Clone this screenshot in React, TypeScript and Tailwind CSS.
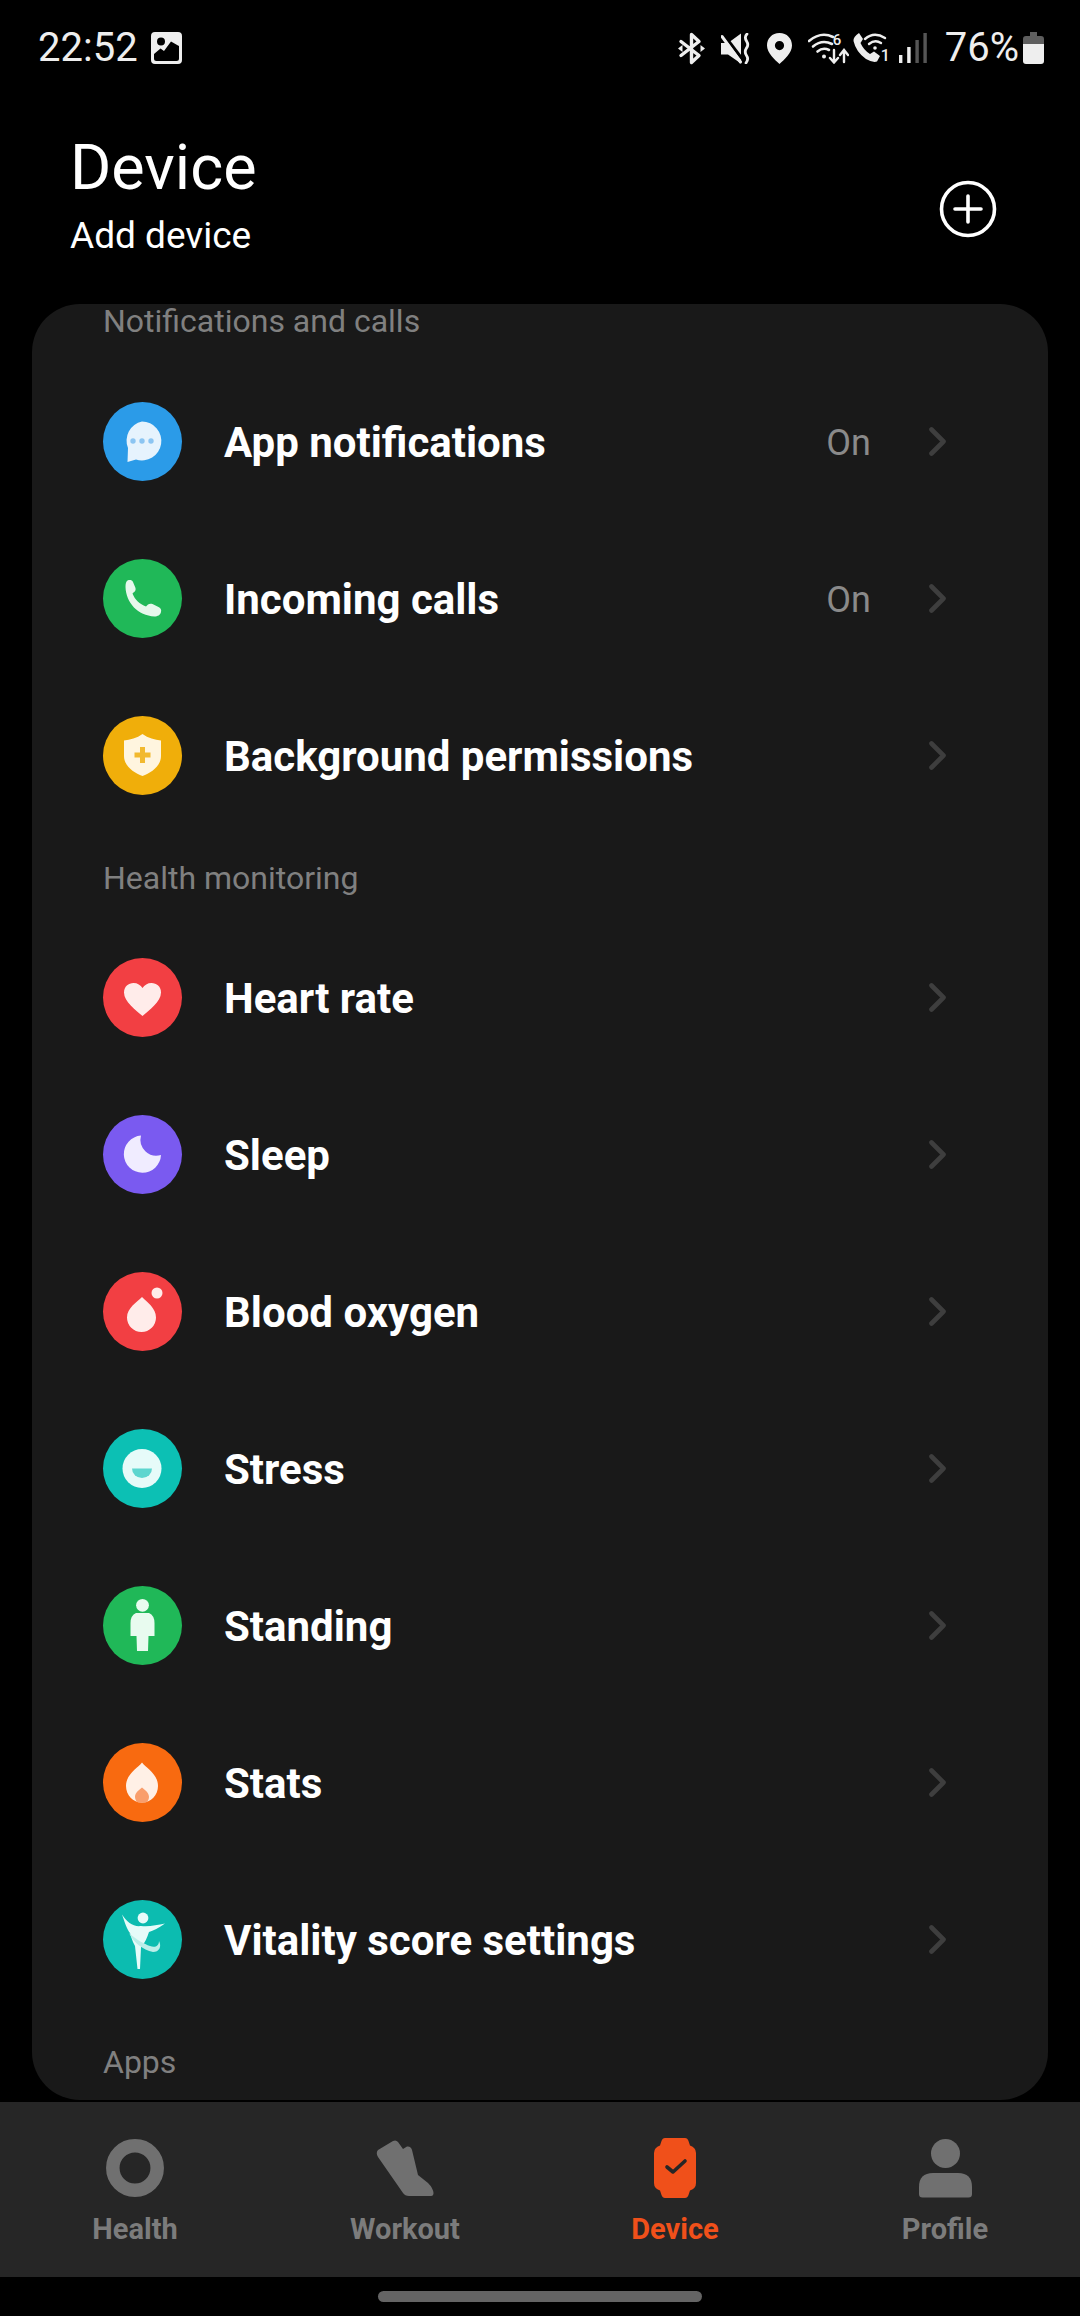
import React from "react";

const W = "#eeeeee";

function Bluetooth() {
  return (
    <svg width="27" height="33" viewBox="0 0 27 33">
      <polyline points="3,9.5 21,23.5 13.5,30.5 13.5,2.5 21,9.5 3,23.5" fill="none" stroke={W} strokeWidth="3.4" strokeLinejoin="round" strokeLinecap="round" />
      <path d="M0 16.5 L4.5 13 V20Z M27 16.5 L22.5 13 V20Z" fill={W} />
    </svg>
  );
}
function Mute() {
  return (
    <svg width="30" height="31" viewBox="0 0 30 31">
      <path d="M0 10 H7 L20 0.5 V30.5 L7 21.5 H0Z" fill={W} />
      <path d="M3 2 L22 27" stroke="#000" strokeWidth="3" />
      <path d="M1 3.5 L19.5 29" stroke={W} strokeWidth="3" strokeLinecap="round" />
      <path d="M26 1 Q23 4 25.5 8 Q28 12 25.5 15 Q23 19 25.5 22.5 Q28 26 25 30" fill="none" stroke={W} strokeWidth="2.8" strokeLinecap="round" />
    </svg>
  );
}
function Pin() {
  return (
    <svg width="25" height="31" viewBox="0 0 25 31">
      <path fillRule="evenodd" d="M12.5 0 C20 0 25 5.5 25 12.5 C25 20 17 27 12.5 31 C8 27 0 20 0 12.5 C0 5.5 5 0 12.5 0Z M12.5 8 A4.6 4.6 0 1 0 12.5 17.2 A4.6 4.6 0 1 0 12.5 8Z" fill={W} />
    </svg>
  );
}
function WifiSix() {
  return (
    <div className="relative h-[32px] w-[41px]">
      <svg width="41" height="32" viewBox="0 0 41 32" className="absolute left-0 top-0">
        <path d="M1 9 Q13 -1 25 5" fill="none" stroke={W} strokeWidth="2.6" strokeLinecap="round" />
        <path d="M5 14.5 Q14 7 24 12" fill="none" stroke={W} strokeWidth="2.6" strokeLinecap="round" />
        <path d="M9.5 19.5 Q15 15 21 18" fill="none" stroke={W} strokeWidth="2.6" strokeLinecap="round" />
        <circle cx="16" cy="24.5" r="2" fill={W} />
        <path d="M26 18 V30 M22 26 L26 30.5 L30 26" fill="none" stroke={W} strokeWidth="2.4" strokeLinecap="round" />
        <path d="M36 30 V18.5 M32 23 L36 18 L40 23" fill="none" stroke={W} strokeWidth="2.4" strokeLinecap="round" />
      </svg>
      <span className="absolute left-[25px] top-[0px] text-[15px] font-medium leading-[16px] text-[#eeeeee]">6</span>
    </div>
  );
}
function CallWifi() {
  return (
    <div className="relative h-[32px] w-[36px]">
      <svg width="36" height="32" viewBox="0 0 36 32" className="absolute left-0 top-0">
        <path d="M6 1 L10 7 L7.5 11 Q10.5 18 17 22 L21 19.5 L27 24 L24 29.5 Q20 31 13 27 Q3 20 0.5 9 Q0 5 6 1Z" fill={W} />
        <path d="M12 7 Q21 -1 32 6" fill="none" stroke={W} strokeWidth="2.4" strokeLinecap="round" />
        <path d="M16 12 Q22 7 28 11" fill="none" stroke={W} strokeWidth="2.4" strokeLinecap="round" />
        <circle cx="22" cy="16" r="1.8" fill={W} />
      </svg>
      <span className="absolute left-[28px] top-[15px] text-[16px] font-medium leading-[17px] text-[#eeeeee]">1</span>
    </div>
  );
}
function Signal() {
  return (
    <svg width="28" height="30" viewBox="0 0 28 30">
      <rect x="0" y="22" width="3.4" height="8" fill="#eeeeee" />
      <rect x="8.2" y="14" width="3.4" height="16" fill="#eeeeee" />
      <rect x="16.4" y="7" width="3.4" height="23" fill="#555555" />
      <rect x="24.4" y="0" width="3.4" height="30" fill="#555555" />
    </svg>
  );
}
function Battery() {
  return (
    <svg width="21" height="32" viewBox="0 0 21 32">
      <path d="M7 0 H14 V4 H18 Q21 4 21 7 V12 H0 V7 Q0 4 3 4 H7Z" fill="#5e5e5e" />
      <path d="M0 12 H21 V29 Q21 32 18 32 H3 Q0 32 0 29Z" fill="#eeeeee" />
    </svg>
  );
}

function GalleryIcon() {
  return (
    <svg width="31" height="32" viewBox="0 0 31 32">
      <path fillRule="evenodd" d="M4 0 H27 Q31 0 31 4 V28 Q31 32 27 32 H4 Q0 32 0 28 V4 Q0 0 4 0Z M3 22 V26.5 Q3 29 5.5 29 H25.5 Q28 29 28 26.5 V14 L27 13.5 L20 9.5 L13 19 L9.5 16.5Z M10 5.5 A4 4 0 1 0 10 13.5 A4 4 0 1 0 10 5.5Z" fill={W} />
    </svg>
  );
}

function Chevron() {
  return (
    <svg width="18" height="29" viewBox="0 0 18 29">
      <polyline points="2.5,2.5 14.5,14.5 2.5,26.5" fill="none" stroke="#3e3e3e" strokeWidth="4.6" strokeLinecap="round" strokeLinejoin="round" />
    </svg>
  );
}

const icons: Record<string, React.ReactNode> = {
  app: (
    <>
      <path d="M39 19.5 A19.5 19.5 0 1 1 33 57.6 L24.5 60 L25 46 A19.5 19.5 0 0 1 39 19.5Z" fill="#e6f3fd" />
      <circle cx="30" cy="39" r="2.7" fill="#8cc5f2" />
      <circle cx="39" cy="39" r="2.7" fill="#8cc5f2" />
      <circle cx="48" cy="39" r="2.7" fill="#8cc5f2" />
    </>
  ),
  call: (
    <path d="M24.5 21.5 C27 20.5 29 21 30 23 L32.5 29 C33 31 32 32.5 30.5 33.5 L29.5 34.5 C32 41 36.5 45 43 47.5 L45 45.5 C46.5 44.5 48 44.5 49.5 45 L55.5 48 C58 49 58.5 51 58 53 C57.5 56 54.5 57.5 51.5 57.5 C35 56.5 23 44 22.5 28 C22.5 25 23 22.5 24.5 21.5Z" fill="#e6f8ec" />
  ),
  shield: (
    <>
      <path d="M39.5 18 C45 22 52 24 58 24.5 V40 C58 50 48 57 39.5 60 C31 57 21 50 21 40 V24.5 C27 24 34 22 39.5 18Z" fill="#fff5df" />
      <path d="M37 31 H42 V36.5 H47.5 V41.5 H42 V47 H37 V41.5 H31.5 V36.5 H37Z" fill="#f2b92e" />
    </>
  ),
  heart: (
    <path d="M39.5 58 C33 52 21 44 21 34.5 C21 28.5 25.5 25 30.5 25 C34.5 25 37.5 27 39.5 30 C41.5 27 44.5 25 48.5 25 C53.5 25 58 28.5 58 34.5 C58 44 46 52 39.5 58Z" fill="#ffecea" />
  ),
  moon: <path d="M38 20.6 A18.6 18.6 0 1 0 58 40 A 16 16 0 0 1 38 20.6Z" fill="#f0ecff" />,
  drop: (
    <>
      <path d="M39 25 C44 30 53 36 53 45.5 A14.5 14.5 0 0 1 24 45.5 C24 36 34 30 39 25Z" fill="#ffecea" />
      <circle cx="54" cy="21" r="5.5" fill="#ffecea" />
    </>
  ),
  stress: (
    <>
      <circle cx="39" cy="39.5" r="19.5" fill="#e6fbf9" />
      <path d="M29 39.5 H49 A10 9.5 0 0 1 29 39.5Z" fill="#5dd6cf" />
    </>
  ),
  stand: (
    <>
      <circle cx="39.5" cy="19.3" r="6.4" fill="#e8fbef" />
      <path d="M33 27 H46 Q51.5 29.5 51.5 37 V50 H45.5 L45 65 H34 L33.5 50 H27.5 V37 Q27.5 29.5 33 27Z" fill="#e8fbef" />
    </>
  ),
  flame: (
    <>
      <path d="M39 19.5 C43 25 55 31 55 43 C55 52 48 59.5 39 59.5 C30 59.5 23 52 23 43 C23 31 35 25 39 19.5Z" fill="#fff0e6" />
      <path d="M39 44.5 C42 47 46 49.5 46 54 C46 57 44 59 43 59.5 H35 C34 59 32 57 32 54 C32 49.5 36 47 39 44.5Z" fill="#f99e6c" />
    </>
  ),
  vitality: (
    <>
      <circle cx="40" cy="18" r="5.4" fill="#e6fbf9" />
      <path d="M19 14.5 C24 22 30 27 38 26 C46 27 54 25 62 23.5 C56 28 50 30.5 46 32 C44 38 42 43 38 47 L37 69 L34.5 69 L32 46 C29 41 28 36 27 33 C24 30 21 20 19 14.5Z" fill="#e6fbf9" />
      <path d="M26 33 C30 42 40 50 50 52 C56 52 59 47 56 41 C56 46 52 48 47 46 C41 44 34 40 26 33Z" fill="#bdeee9" />
    </>
  ),
};

function Row({ bg, icon, label, value }: { bg: string; icon: string; label: string; value?: string }) {
  return (
    <div className="flex h-[157px] items-center pl-[71px] pr-[101px]">
      <div className={`h-[79px] w-[79px] shrink-0 rounded-full ${bg}`}>
        <svg width="79" height="79" viewBox="0 0 79 79">
          {icons[icon]}
        </svg>
      </div>
      <div className="ml-[42px] flex-1 pt-[3px] text-[42px] font-bold leading-[50px] text-white">{label}</div>
      {value ? <div className="mr-[58px] pt-[3px] text-[36px] leading-[44px] text-[#8a8a8a]">{value}</div> : null}
      <Chevron />
    </div>
  );
}

function Section({ label, className }: { label: string; className: string }) {
  return <div className={`pl-[71px] text-[32px] text-[#808080] ${className}`}>{label}</div>;
}

function NavItem({ label, active, children }: { label: string; active?: boolean; children: React.ReactNode }) {
  return (
    <div className="flex flex-col items-center pt-[36px]">
      <div className="flex h-[60px] items-center justify-center">{children}</div>
      <div className={`mt-[14px] text-[29px] font-bold leading-[34px] ${active ? "text-[#f0501a]" : "text-[#7c7c7c]"}`}>{label}</div>
    </div>
  );
}

export default function App() {
  return (
    <div className="flex h-[2316px] w-[1080px] flex-col overflow-hidden bg-black font-['Roboto',sans-serif]">
      <div className="flex h-[96px] shrink-0 items-center pl-[38px] pr-[36px]">
        <span className="text-[40px] leading-[48px] text-[#eeeeee]">22:52</span>
        <span className="ml-[13px] flex"><GalleryIcon /></span>
        <div className="ml-auto flex items-center">
          <span className="flex"><Bluetooth /></span>
          <span className="ml-[16px] flex"><Mute /></span>
          <span className="ml-[16px] flex"><Pin /></span>
          <span className="ml-[16px] flex"><WifiSix /></span>
          <span className="ml-[4px] flex"><CallWifi /></span>
          <span className="ml-[10px] flex"><Signal /></span>
          <span className="ml-[18px] text-[40px] leading-[48px] text-[#eeeeee]">76%</span>
          <span className="ml-[4px] flex"><Battery /></span>
        </div>
      </div>

      <div className="flex h-[208px] shrink-0 justify-between pl-[70px] pr-[83px]">
        <div className="pt-[36px]">
          <div className="text-[63px] leading-[72px] text-white">Device</div>
          <div className="mt-[10px] text-[37px] leading-[44px] text-white">Add device</div>
        </div>
        <div className="mt-[84px] h-[58px] w-[58px]">
          <svg width="58" height="58" viewBox="0 0 58 58">
            <circle cx="29" cy="29" r="26.5" fill="none" stroke="#ffffff" strokeWidth="3.6" />
            <path d="M29 16 V42 M16 29 H42" stroke="#ffffff" strokeWidth="3.6" strokeLinecap="round" />
          </svg>
        </div>
      </div>

      <div className="mx-[32px] flex-1 rounded-[48px] bg-[#191919]">
        <Section label="Notifications and calls" className="h-[59px] leading-[34px]" />
        <Row bg="bg-[#2b9be8]" icon="app" label="App notifications" value="On" />
        <Row bg="bg-[#20b858]" icon="call" label="Incoming calls" value="On" />
        <Row bg="bg-[#f0ae0a]" icon="shield" label="Background permissions" />
        <Section label="Health monitoring" className="h-[85px] pt-[24px] leading-[40px]" />
        <Row bg="bg-[#f23f43]" icon="heart" label="Heart rate" />
        <Row bg="bg-[#7a5af0]" icon="moon" label="Sleep" />
        <Row bg="bg-[#f23f43]" icon="drop" label="Blood oxygen" />
        <Row bg="bg-[#0cc0b4]" icon="stress" label="Stress" />
        <Row bg="bg-[#20b858]" icon="stand" label="Standing" />
        <Row bg="bg-[#f86a10]" icon="flame" label="Stats" />
        <Row bg="bg-[#0cbcb0]" icon="vitality" label="Vitality score settings" />
        <Section label="Apps" className="h-[82px] pt-[24px] leading-[40px]" />
      </div>

      <div className="mt-[2px] grid h-[175px] shrink-0 grid-cols-4 bg-[#262626]">
        <NavItem label="Health">
          <svg width="58" height="58" viewBox="0 0 58 58">
            <circle cx="29" cy="29" r="22.2" fill="none" stroke="#707070" strokeWidth="13.5" />
          </svg>
        </NavItem>
        <NavItem label="Workout">
          <svg width="58" height="58" viewBox="0 0 58 58">
            <path d="M2 11 L17 2 Q20 0.5 22 3 L27 10 L31 7.5 Q35 7 36 11 L42 36 L52 44 Q57 49 57.5 54 Q57.5 57 55 57 L33 57 Q29 57 27 54 L2 18 Q-0.5 14 2 11Z" fill="#707070" />
          </svg>
        </NavItem>
        <NavItem label="Device" active>
          <svg width="42" height="60" viewBox="0 0 42 60">
            <path d="M11 0 H31 Q33.5 0 34.5 3 L36 7.5 Q42 9.5 42 15 V45 Q42 50.5 36 52.5 L34.5 57 Q33.5 60 31 60 H11 Q8.5 60 7.5 57 L6 52.5 Q0 50.5 0 45 V15 Q0 9.5 6 7.5 L7.5 3 Q8.5 0 11 0Z" fill="#f0501a" />
            <path d="M13 29 L19 34 L31 23" fill="none" stroke="#262626" strokeWidth="3.6" strokeLinecap="round" strokeLinejoin="round" />
          </svg>
        </NavItem>
        <NavItem label="Profile">
          <svg width="53" height="60" viewBox="0 0 53 60">
            <circle cx="26.5" cy="15.5" r="14.5" fill="#707070" />
            <path d="M14 35 H39 Q53 35 53 49 V56 Q53 59.5 49.5 59.5 H3.5 Q0 59.5 0 56 V49 Q0 35 14 35Z" fill="#707070" />
          </svg>
        </NavItem>
      </div>

      <div className="flex h-[39px] shrink-0 justify-center pt-[14px]">
        <div className="h-[11px] w-[324px] rounded-full bg-[#646464]" />
      </div>
    </div>
  );
}
